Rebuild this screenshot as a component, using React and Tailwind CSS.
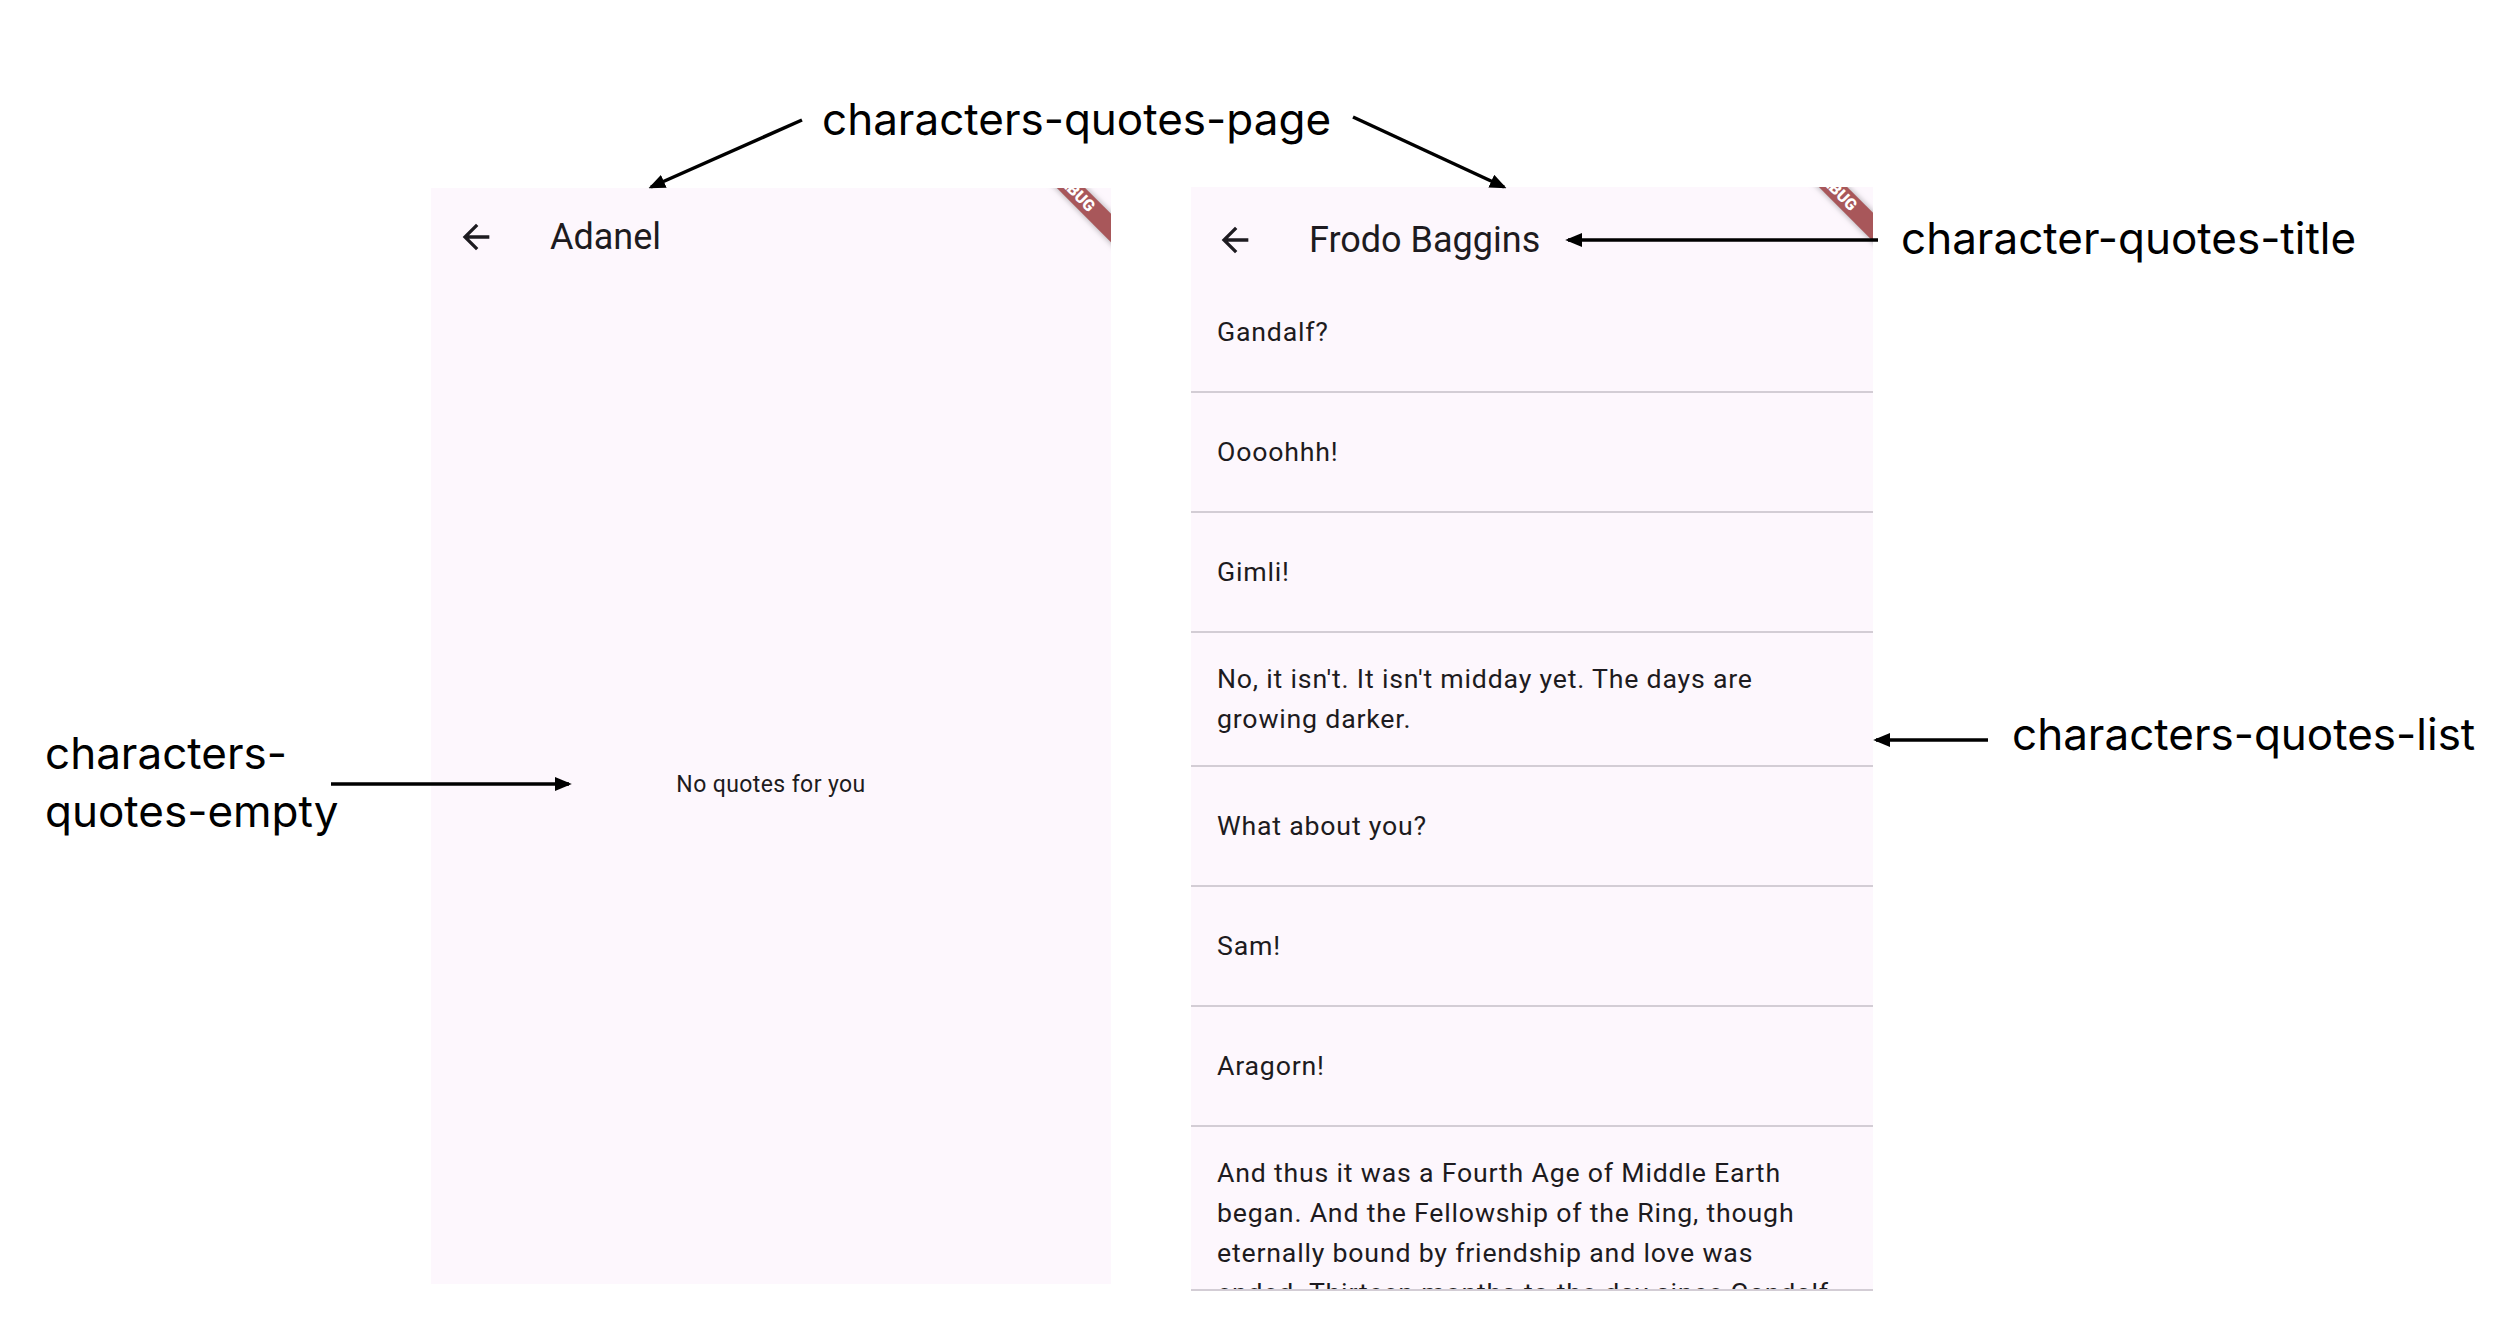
import React from 'react';

const quotes = [
  'Gandalf?',
  'Oooohhh!',
  'Gimli!',
  "No, it isn't. It isn't midday yet. The days are growing darker.",
  'What about you?',
  'Sam!',
  'Aragorn!',
  'And thus it was a Fourth Age of Middle Earth began. And the Fellowship of the Ring, though eternally bound by friendship and love was ended. Thirteen months to the day since Gandalf sent us on our long journey, we found ourselves looking upon a familiar sight. We were home.',
];

const BackArrow = () => (
  <svg viewBox="0 0 24 24" className="w-10 h-10 shrink-0" fill="#1d1b20">
    <path d="M20 11H7.83l5.59-5.59L12 4l-8 8 8 8 1.41-1.41L7.83 13H20v-2z" />
  </svg>
);

const DebugBanner = () => (
  <div className="absolute top-[-7px] right-[-63px] w-[200px] h-[20px] rotate-45 bg-[#a8575a] shadow-[0_0_6px_rgba(0,0,0,0.35)] flex items-center justify-center">
    <span className="text-white text-[16px] font-black leading-none font-['Roboto',sans-serif]">DEBUG</span>
  </div>
);

const Phone = ({ title, barClass, iconPad, className, children }) => (
  <div className={`relative overflow-hidden bg-[#fdf7fd] flex flex-col font-['Roboto',sans-serif] text-[#1d1b20] ${className}`}>
    <div className={`flex items-center shrink-0 ${barClass}`}>
      <div className={iconPad}>
        <BackArrow />
      </div>
      <h1 className="ml-[54px] text-[36px] leading-none font-normal">{title}</h1>
    </div>
    {children}
    <DebugBanner />
  </div>
);

export default function App() {
  return (
    <div className="relative w-[2504px] h-[1324px] bg-white overflow-hidden">
      {/* the two screens */}
      <div className="flex items-start gap-[80px] pl-[431px] pt-[187px]">
        <Phone
          title="Adanel"
          barClass="h-[98px]"
          iconPad="pl-[25px]"
          className="w-[680px] h-[1096px] mt-px"
        >
          <div className="flex-1 flex items-center justify-center">
            <p className="text-[23px] tracking-[0.4px]">No quotes for you</p>
          </div>
        </Phone>

        <Phone
          title="Frodo Baggins"
          barClass="h-[86px] pt-[20px]"
          iconPad="pl-[24px]"
          className="w-[682px] h-[1104px] border-b-2 border-[#d3cdd5]"
        >
          <ul className="flex-1 overflow-hidden">
            {quotes.map((q, i) => (
              <li
                key={i}
                className="min-h-[120px] py-[26px] pl-[26px] pr-[40px] flex items-center border-b-2 border-[#d3cdd5] text-[26.7px] leading-[40px] tracking-[0.8px]"
              >
                {q}
              </li>
            ))}
          </ul>
        </Phone>
      </div>

      {/* callout labels */}
      <div className="font-['Inter',sans-serif] text-[44px] leading-none text-black">
        <span className="absolute left-[822px] top-[97px]">characters-quotes-page</span>
        <span className="absolute left-[1901px] top-[216px]">character-quotes-title</span>
        <span className="absolute left-[2012px] top-[712px]">characters-quotes-list</span>
        <span className="absolute left-[45px] top-[724px] leading-[58px]">
          characters-
          <br />
          quotes-empty
        </span>
      </div>

      {/* callout arrows */}
      <svg className="absolute inset-0 pointer-events-none" width="2504" height="1324">
        <defs>
          <marker id="head" viewBox="0 0 12 10" refX="10" refY="5" markerWidth="4.8" markerHeight="4" orient="auto">
            <path d="M0,0 L12,5 L0,10 z" fill="#000" />
          </marker>
        </defs>
        <g stroke="#000" strokeWidth="3.5" markerEnd="url(#head)">
          <line x1="802" y1="120" x2="651" y2="187" />
          <line x1="1353" y1="117" x2="1504" y2="187" />
          <line x1="1878" y1="240" x2="1568" y2="240" />
          <line x1="1988" y1="740" x2="1876" y2="740" />
          <line x1="331" y1="784" x2="569" y2="784" />
        </g>
      </svg>
    </div>
  );
}
